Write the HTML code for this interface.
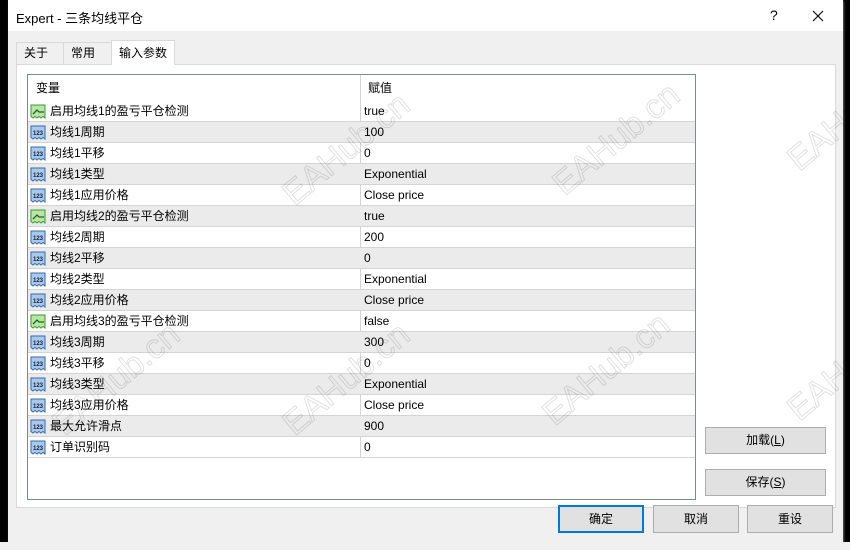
<!DOCTYPE html>
<html><head><meta charset="utf-8"><style>
*{margin:0;padding:0;box-sizing:border-box}
body{width:850px;height:550px;background:#000;position:relative;overflow:hidden;font-family:"Liberation Sans","Noto Sans CJK SC",sans-serif;font-size:12px;color:#000}
.abs{position:absolute}
#win{left:8px;top:0;width:835px;height:542px;background:#f0f0f0;box-shadow:1px 1px 2px #666}
#title{left:0;top:0;width:835px;height:31px;background:#fff}
.tab{top:42px;height:22px;border:1px solid #d9d9d9;border-bottom:none;background:#f0f0f0;line-height:20px;padding-left:7px}
#panel{left:8px;top:64px;width:820px;height:444px;background:#fff;border:1px solid #d9d9d9}
#list{left:19px;top:74px;width:669px;height:426px;background:#fff;border:1px solid #828790;overflow:hidden}
.row{position:absolute;left:0;width:667px;height:21px;border-bottom:1px solid #d4d4d4;line-height:20px}
.row.g{background:#ebebeb}
.n{position:absolute;left:22px}
.v{position:absolute;left:336px}
.sep{position:absolute;left:332px;top:0;width:1px;height:383px;background:#d4d4d4}
.ic{position:absolute;left:2px;top:3px}
.btn{position:absolute;background:#e1e1e1;border:1px solid #adadad;text-align:center;font-size:12px}
.wm{position:absolute;font-size:34px;transform:rotate(-40deg);font-family:"Liberation Sans",sans-serif;white-space:nowrap;-webkit-text-stroke:1px rgba(0,0,0,0.12);color:transparent}
</style></head><body>
<div id="win" class="abs">
 <div id="title" class="abs"><span class="abs" style="left:8px;top:8px;font-size:13px">Expert - 三条均线平仓</span>
 <span class="abs" style="left:762px;top:7px;font-size:14px">?</span>
 <svg class="abs" style="left:804px;top:10px" width="12" height="12"><path d="M1 1L11 11M11 1L1 11" stroke="#000" stroke-width="1.1"/></svg></div>
 <div class="tab abs" style="left:8px;width:48px">关于</div>
 <div class="tab abs" style="left:55px;width:49px">常用</div>
 <div id="panel" class="abs"></div>
 <div class="tab abs" style="left:103px;top:40px;width:64px;height:25px;background:#fff;line-height:24px">输入参数</div>
 <div id="list" class="abs">
  <div class="row" style="top:0;height:26px;border-bottom:none;line-height:26px"><span style="position:absolute;left:8px">变量</span><span style="position:absolute;left:340px">赋值</span></div>
  <div class="sep"></div>
  <div id="rows"></div>
 </div>
 <div class="btn" style="left:697px;top:427px;width:121px;height:27px;line-height:25px">加载(<u>L</u>)</div>
 <div class="btn" style="left:697px;top:469px;width:121px;height:27px;line-height:25px">保存(<u>S</u>)</div>
 <div class="btn" style="left:550px;top:505px;width:86px;height:28px;line-height:24px;border:2px solid #0078d7">确定</div>
 <div class="btn" style="left:645px;top:505px;width:86px;height:28px;line-height:26px">取消</div>
 <div class="btn" style="left:739px;top:505px;width:86px;height:28px;line-height:26px">重设</div>
</div>
<div class="abs" style="left:0;top:542px;width:850px;height:8px;background:#f0f0f0"></div>
<div class="wm" style="left:270px;top:130px">EAHub.cn</div>
<div class="wm" style="left:540px;top:120px">EAHub.cn</div>
<div class="wm" style="left:780px;top:110px">EAHub</div>
<div class="wm" style="left:270px;top:360px">EAHub.cn</div>
<div class="wm" style="left:40px;top:360px">EAHub.cn</div>
<div class="wm" style="left:530px;top:350px">EAHub.cn</div>
<div class="wm" style="left:780px;top:360px">EAHub</div>
<script>
var d=[["g","启用均线1的盈亏平仓检测","true"],["b","均线1周期","100"],["b","均线1平移","0"],["b","均线1类型","Exponential"],["b","均线1应用价格","Close price"],["g","启用均线2的盈亏平仓检测","true"],["b","均线2周期","200"],["b","均线2平移","0"],["b","均线2类型","Exponential"],["b","均线2应用价格","Close price"],["g","启用均线3的盈亏平仓检测","false"],["b","均线3周期","300"],["b","均线3平移","0"],["b","均线3类型","Exponential"],["b","均线3应用价格","Close price"],["b","最大允许滑点","900"],["b","订单识别码","0"]];
var gi='<svg class="ic" width="17" height="15"><path d="M1 1H15V14L13 12.5L11 14L9 12.5L7 14L5 12.5L3 14L1 12.5Z" fill="#b8e6a8" stroke="#3c9a2a"/><path d="M3 10L7 6L9 8L14 8" stroke="#1a6a10" fill="none" stroke-width="1.3"/></svg>';
var bi='<svg class="ic" width="17" height="15"><path d="M1 1H15V14L13 12.5L11 14L9 12.5L7 14L5 12.5L3 14L1 12.5Z" fill="#a8c8ee" stroke="#3a6aa8"/><text x="8" y="10" font-size="6" font-weight="bold" text-anchor="middle" fill="#123" font-family="Liberation Sans">123</text></svg>';
var h='';for(var i=0;i<d.length;i++){h+='<div class="row'+(i%2?' g':'')+'" style="top:'+(26+i*21)+'px">'+(d[i][0]=='g'?gi:bi)+'<span class="n">'+d[i][1]+'</span><span class="v">'+d[i][2]+'</span></div>';}
document.getElementById('rows').innerHTML=h;
</script>
</body></html>
